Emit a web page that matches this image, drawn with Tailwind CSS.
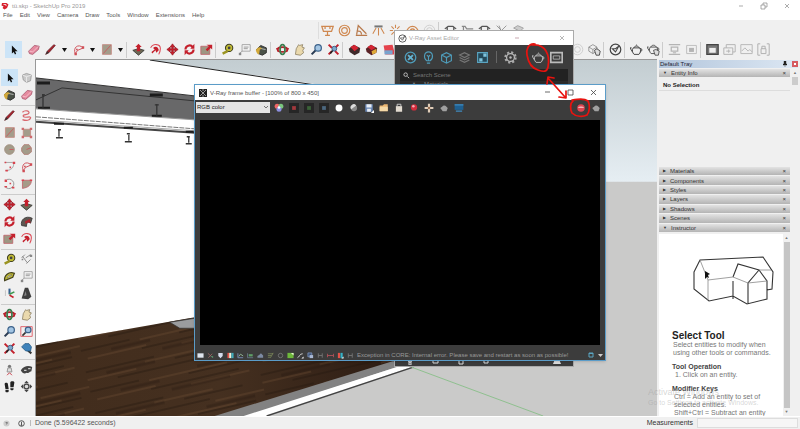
<!DOCTYPE html>
<html lang="en">
<head>
  <meta charset="UTF-8" />
  <meta name="viewport" content="width=device-width, initial-scale=1.0"/>
  <title>tü.skp - SketchUp Pro 2019</title>
  <script src="https://cdn.jsdelivr.net/npm/@tailwindcss/browser@4"></script>
</head>
<body class="relative h-screen overflow-hidden flex flex-col bg-[#f0f0f0] font-['Liberation_Sans',Arial,sans-serif] text-[6px] leading-[8px] text-[#555]">

  <!-- Icon set, 16x16 grid -->
  <svg class="hidden" xmlns="http://www.w3.org/2000/svg">
    <symbol id="select" viewBox="0 0 16 16"><path d="M6 3v10l2.300-2 1.500 3 1.500-.7-1.400-3H13z" fill="#111"/></symbol>
    <symbol id="component" viewBox="0 0 16 16"><path d="M3 5l5-2 6 2-1 7-5 2-4-3z" fill="#c9c9c9" stroke="#999"/><path d="M3 5l5 2 6-2M8 7v7" fill="none" stroke="#eee"/></symbol>
    <symbol id="eraser" viewBox="0 0 16 16"><path d="M2 10l7-7 6 1-1 4-7 6-4-1z" fill="#e58a9f" stroke="#a8566c"/><path d="M3 10l4 1 7-7" fill="none" stroke="#f8c4cf"/></symbol>
    <symbol id="pencil" viewBox="0 0 16 16"><path d="M2 14l2-4 8-8 2 1-8 9z" fill="#a3212b" stroke="#531218" stroke-width=".7"/><path d="M2 14l2-4 2 2z" fill="#333"/></symbol>
    <symbol id="freehand" viewBox="0 0 16 16"><path d="M3 4c3-3 9-2 8 1s-8 1-7 4 10-1 9 2-5 4-10 2" fill="none" stroke="#d8656c" stroke-width="1.500"/></symbol>
    <symbol id="arc" viewBox="0 0 16 16"><path d="M4 13C1 6 7 0 14 6L7 9z" fill="none" stroke="#d0515a" stroke-width="1.200"/><path d="M3 12h3v3H3zM12 4h3v3h-3zM5 7h2v2H5z" fill="#cf4d55"/></symbol>
    <symbol id="arc2" viewBox="0 0 16 16"><path d="M2 3h10M13 3c1 6-3 10-10 10" fill="none" stroke="#999"/><path d="M2 2h2v2H2zM12 2h3v3h-3zM8 8h2v2H8zM3 12h3v2H3z" fill="#d8434e"/></symbol>
    <symbol id="arc3" viewBox="0 0 16 16"><path d="M5 3c8-2 12 8 4 11-3 1-6-1-7-3" fill="none" stroke="#888"/><path d="M2 3h3v3H2zM8 7h2v2H8zM2 11h3v2H2zM11 12h3v2h-3z" fill="#d8434e"/></symbol>
    <symbol id="pie" viewBox="0 0 16 16"><path d="M3 4h11c0 6-4 9-11 10z" fill="#a59b88" stroke="#c2616a"/><path d="M2 3h3v2H2zM12 3h3v2h-3z" fill="#d8434e"/></symbol>
    <symbol id="rect" viewBox="0 0 16 16"><path d="M3 2h11v12H3z" fill="#a39c8a" stroke="#c58a82"/><path d="M4 13l9-10" stroke="#d0515a"/></symbol>
    <symbol id="rotrect" viewBox="0 0 16 16"><path d="M4 4h9v9H4z" fill="#a39c8a" stroke="#c58a82"/><path d="M2 2h3v3H2zM12 2h3v3h-3zM2 12h3v3H2zM12 12h3v3h-3z" fill="#cf6a6e"/></symbol>
    <symbol id="circle" viewBox="0 0 16 16"><circle cx="8" cy="8" r="6" fill="#a39c8a" stroke="#a08d7d"/><path d="M8 8h5" stroke="#d0515a"/></symbol>
    <symbol id="polygon" viewBox="0 0 16 16"><path d="M5 2h6l3 4v5l-4 3H5l-3-4V6z" fill="#a39c8a" stroke="#b07b73"/><path d="M8 8l5-2" stroke="#d0515a"/></symbol>
    <symbol id="pushpull" viewBox="0 0 16 16"><path d="M1 9l7-2 7 2-7 6z" fill="#6d6a55" stroke="#333"/><path d="M8 1l4 4h-2v5H6V5H4z" fill="#c4202c"/></symbol>
    <symbol id="offset" viewBox="0 0 16 16"><path d="M2 6C5 0 14 1 14 7c0 3-1 5-2 7" fill="none" stroke="#dd4b57" stroke-width="1.300"/><path d="M5 6c3-3 7-1 7 3l-3 3-1-3-4 4-1-2 4-3z" fill="#c4202c"/></symbol>
    <symbol id="move" viewBox="0 0 16 16"><path d="M8 1l3 4H9v2h2V5l4 3-4 3V9H9v2h2l-3 4-3-4h2V9H5v2L1 8l4-3v2h2V5H5z" fill="#c4202c" stroke="#8f1420" stroke-width=".7"/></symbol>
    <symbol id="rotate" viewBox="0 0 16 16"><path d="M3 8a5 5 0 019-3M13 8a5 5 0 01-9 3" fill="none" stroke="#c4202c" stroke-width="2.600"/><path d="M14 1v6H9zM2 15V9h5z" fill="#c4202c"/></symbol>
    <symbol id="followme" viewBox="0 0 16 16"><path d="M2 13C0 6 7 0 15 4l-2 6c-3-2-5-1-5 4z" fill="#5e5650" stroke="#333"/><path d="M6 8l6-3 1 5-3-1-3 2z" fill="#b3222d"/></symbol>
    <symbol id="scale" viewBox="0 0 16 16"><path d="M1 4h11v10H1z" fill="#9d9783" stroke="#c2616a"/><path d="M8 2h7v6l-2-2-4 4-2-2 4-4z" fill="#c4202c"/></symbol>
    <symbol id="tape" viewBox="0 0 16 16"><circle cx="10" cy="6" r="4.500" fill="#c3bd35" stroke="#3d3d22" stroke-width="1.300"/><circle cx="10" cy="6" r="1.700" fill="#444"/><path d="M2 13l6-3" stroke="#9b9421" stroke-width="3"/></symbol>
    <symbol id="dimension" viewBox="0 0 16 16"><path d="M3 4l6 8M2 6l4-4M8 13l5-5M7 6l6-4" fill="none" stroke="#777"/><path d="M12 2h3v3h-3zM2 7h2v2H2z" fill="#888"/></symbol>
    <symbol id="protractor" viewBox="0 0 16 16"><path d="M2 13C1 7 7 1 14 4l-2 5z" fill="#c3bd35" stroke="#44421f" stroke-width="1.500"/><path d="M5 10c1-3 3-4 6-4z" fill="#eee" stroke="#555" stroke-width=".6"/></symbol>
    <symbol id="textlabel" viewBox="0 0 16 16"><path d="M5 2h10v8H5z" fill="#f6f6f6" stroke="#999"/><path d="M7 5h6M7 7h5M5 10l-3 3" stroke="#888"/><path d="M1 12h3v3H1z" fill="#888"/></symbol>
    <symbol id="axes" viewBox="0 0 16 16"><path d="M8 9V2" stroke="#345f8f" stroke-width="2.500"/><path d="M8 10l5 3" stroke="#c4202c" stroke-width="2"/><path d="M8 9l6-3" stroke="#3e9a50" stroke-width="2"/><path d="M3 4v7" stroke="#bbb"/></symbol>
    <symbol id="text3d" viewBox="0 0 16 16"><path d="M6 1h4l4 11-4 3-8-1z" fill="#3f3f3f"/><path d="M7 5l-2 6 3-1z" fill="#888"/></symbol>
    <symbol id="paint" viewBox="0 0 16 16"><path d="M2 8l5-5 7 3v6l-5 3-5-2z" fill="#4a5148" stroke="#222"/><path d="M1 9c2-4 5-5 8-2l-3 1-1 6c-2 0-3-2-4-5z" fill="#d3a93a"/><path d="M8 7l5 1" stroke="#ccc"/></symbol>
    <symbol id="orbit" viewBox="0 0 16 16"><ellipse cx="8" cy="8" rx="6" ry="3" fill="none" stroke="#b8222d" stroke-width="2.200"/><ellipse cx="8" cy="8" rx="3" ry="6" fill="none" stroke="#3c7e4f" stroke-width="2.200"/><path d="M0 6l4 0-2 5zM16 6l-4 0 2 5z" fill="#b8222d"/></symbol>
    <symbol id="pan" viewBox="0 0 16 16"><path d="M3 14l1-7 3-5 1 1 4-1-1 3 3 1-2 3 1 3-4 3z" fill="#ead9ad" stroke="#8e8061"/></symbol>
    <symbol id="zoom" viewBox="0 0 16 16"><path d="M2 14l5-5" stroke="#2b3c53" stroke-width="2.500"/><circle cx="10" cy="6" r="4" fill="#a3c5e3" stroke="#3c628a" stroke-width="1.500"/></symbol>
    <symbol id="zoomwin" viewBox="0 0 16 16"><path d="M1 2h14v12H1z" fill="none" stroke="#e0666f" stroke-width="1.200"/><path d="M3 13l4-4" stroke="#333" stroke-width="2"/><circle cx="10" cy="6" r="3.500" fill="#a3c5e3" stroke="#3c628a" stroke-width="1.500"/></symbol>
    <symbol id="zoomext" viewBox="0 0 16 16"><path d="M2 2l4 4M14 2l-4 4M2 14l4-4M14 14l-4-4" stroke="#c4202c" stroke-width="2.500"/><path d="M4 13l4-5" stroke="#222" stroke-width="2"/><circle cx="9" cy="7" r="3" fill="#7ea9cc" stroke="#2f4f75"/></symbol>
    <symbol id="previous" viewBox="0 0 16 16"><path d="M8 9l6 5" stroke="#333" stroke-width="2.500"/><path d="M2 6l4-4h5l3 4-1 5-6 0z" fill="#3f83bb" stroke="#245a86"/></symbol>
    <symbol id="camera" viewBox="0 0 16 16"><circle cx="8" cy="4" r="2" fill="#777"/><path d="M6 6h4l1 5H5z" fill="#ddd" stroke="#888"/><path d="M5 15l3-3 3 3" fill="none" stroke="#c4202c"/></symbol>
    <symbol id="look" viewBox="0 0 16 16"><path d="M1 9c4-6 10-6 14-4l-1 5c-3 1-4 3-6 2-2 2-5 1-7-3z" fill="#444"/><path d="M5 9h3M10 7h3" stroke="#ccc" stroke-width="1.500"/></symbol>
    <symbol id="walk" viewBox="0 0 16 16"><path d="M2 5c0-2 4-2 4 0l1 6H3zM3 12h4v2c-1 2-4 1-4 0zM9 3c0-2 5-2 5 0l-1 6H9zM9 10h4v1c0 2-4 2-4 0z" fill="#222"/></symbol>
    <symbol id="section" viewBox="0 0 16 16"><path d="M8 1l3 3H5zM8 15l3-3H5zM1 8l3-3v6zM15 8l-3-3v6z" fill="#444"/><circle cx="8" cy="8" r="3" fill="#ddd" stroke="#444" stroke-width="1.500"/></symbol>
    <symbol id="warehouse" viewBox="0 0 16 16"><path d="M1 7l6-5 8 4-1 6-6 3-6-4z" fill="#3f2a2a"/><path d="M3 5l5-3 5 4-5 4z" fill="#d42432"/></symbol>
    <symbol id="extension" viewBox="0 0 16 16"><path d="M1 7l6-5 8 4-1 6-6 3-6-4z" fill="#5a2226"/><path d="M3 5l5-3 5 4-5 3z" fill="#d42432"/><path d="M8 10l6-3v5l-5 2z" fill="#e0aa38"/></symbol>
    <symbol id="layout" viewBox="0 0 16 16"><path d="M2 3l11-1 3 12H4z" fill="#e4434d"/><path d="M3 9h10v5H3z" fill="#79a3cd"/></symbol>

    <symbol id="lightrect" viewBox="0 0 16 16"><path d="M1 3h14l-2 6H3zM8 9v5M5 14h6M5 3v3M11 3v3" fill="none" stroke="#cf8850" stroke-width="1.500"/></symbol>
    <symbol id="lightsphere" viewBox="0 0 16 16"><circle cx="8" cy="8" r="6.500" fill="none" stroke="#cf8850" stroke-width="1.400"/><circle cx="8" cy="8" r="3.500" fill="none" stroke="#cf8850" stroke-width="1.400"/></symbol>
    <symbol id="lightspot" viewBox="0 0 16 16"><path d="M2 13L4 2l10 10M2 9c4-1 6 0 6 4M1 14h14" fill="none" stroke="#b87a4c" stroke-width="1.500"/></symbol>
    <symbol id="lighties" viewBox="0 0 16 16"><path d="M3 3h10" stroke="#777" stroke-width="2.500"/><path d="M8 5v9M5 5l-4 7M11 5l4 7" fill="none" stroke="#cf8850" stroke-width="1.300"/></symbol>
    <symbol id="lightomni" viewBox="0 0 16 16"><path d="M8 1v4M8 11v4M1 8h4M11 8h4M3 3l3 3M10 10l3 3M13 3l-3 3M3 13l3-3" stroke="#cf8850" stroke-width="1.300"/></symbol>
    <symbol id="lightdome" viewBox="0 0 16 16"><path d="M1 10a7 7 0 0114 0zM5 10a3 4 0 016 0" fill="none" stroke="#cf8850" stroke-width="1.500"/></symbol>
    <symbol id="lightmesh" viewBox="0 0 16 16"><circle cx="8" cy="8" r="6.500" fill="none" stroke="#c8c8c8"/><circle cx="8" cy="8" r="3.500" fill="none" stroke="#c8c8c8"/></symbol>
    <symbol id="plane" viewBox="0 0 16 16"><path d="M1 6l4-3h6l4 3M4 8V4M12 8V4" fill="none" stroke="#555" stroke-width="1.500"/></symbol>
    <symbol id="proxy" viewBox="0 0 16 16"><path d="M1 3h4l2 3h8M3 3v6" fill="none" stroke="#888" stroke-width="1.500"/></symbol>
    <symbol id="fur" viewBox="0 0 16 16"><path d="M2 2l6 6 6-6M5 2l3 8" fill="none" stroke="#888"/></symbol>
    <symbol id="mesh" viewBox="0 0 16 16"><path d="M2 5l5-3 7 3-4 4z" fill="#ccc" stroke="#999"/></symbol>
    <symbol id="cubehand" viewBox="0 0 16 16"><path d="M1 5l5-3 5 3v5l-5 3-5-3zM1 5l5 3 5-3M6 8v5" fill="none" stroke="#888"/><path d="M8 9l3-2 4 3-1 5h-4z" fill="#ddd" stroke="#333"/></symbol>
    <symbol id="vray" viewBox="0 0 16 16"><circle cx="8" cy="8" r="6.500" fill="none" stroke="#444" stroke-width="1.500"/><path d="M4 7l4 4 4-7-4 3z" fill="none" stroke="#444" stroke-width="1.300"/></symbol>
    <symbol id="teapot" viewBox="0 0 16 16"><path d="M4 6h8c2 3 1 6-1 8H5c-2-2-3-5-1-8zM5 6c0-3 6-3 6 0M8 3V2M3 11L0 6h2M12 7c4-1 3 4 0 4" fill="none" stroke="currentColor" stroke-width="1.200"/></symbol>
    <symbol id="teapothand" viewBox="0 0 16 16"><path d="M4 5h8c2 3 1 6-1 8H5c-2-2-3-5-1-8zM5 5c0-3 6-3 6 0M3 10L0 5h2M12 6c4-1 3 4 0 4" fill="none" stroke="#555" stroke-width="1.200"/><path d="M8 9l3-1 4 2-1 5h-4z" fill="#ddd" stroke="#444"/></symbol>
    <symbol id="viewport" viewBox="0 0 16 16"><path d="M1 2h14M1 14h14M4 5h8v5H4zM6 12h4" fill="none" stroke="#b4b4b4" stroke-width="1.500"/></symbol>
    <symbol id="vpregion" viewBox="0 0 16 16"><path d="M2 3h12v10H2z" fill="none" stroke="#b4b4b4"/><path d="M5 6h6v5H5z" fill="#b4b4b4"/></symbol>
    <symbol id="bufferwin" viewBox="0 0 16 16"><path d="M1 2h14v12H1z" fill="#777" stroke="#444" stroke-width="1.500"/><path d="M4 6h8v6H4z" fill="#eee"/></symbol>
    <symbol id="frame" viewBox="0 0 16 16"><path d="M1 2h14v12H1z" fill="none" stroke="currentColor" stroke-width="2"/><path d="M4 6h8v4H4z" fill="none" stroke="currentColor"/></symbol>
    <symbol id="batch" viewBox="0 0 16 16"><path d="M1 6h11v8H1zM4 6V2h11v9h-3M4 10h5M7 8v4" fill="none" stroke="#b4b4b4" stroke-width="1.200"/></symbol>
    <symbol id="cloudframe" viewBox="0 0 16 16"><path d="M1 2h14v11H1zM2 10l4-4 4 4 2-2 3 3" fill="none" stroke="#b8b8b8" stroke-width="1.200"/></symbol>
    <symbol id="lock" viewBox="0 0 16 16"><path d="M4 1H1v14h3M12 1h3v14h-3M5 7h6v6H5zM6 7V4h4v3" fill="none" stroke="#b0b0b0" stroke-width="1.200"/></symbol>

    <symbol id="materials" viewBox="0 0 16 16"><circle cx="8" cy="8" r="6.500" fill="none" stroke="#4f9dbb" stroke-width="1.600"/><path d="M5 5l6 6M11 5l-6 6" stroke="#63b4d3" stroke-width="2.200"/></symbol>
    <symbol id="bulb" viewBox="0 0 16 16"><path d="M6 12C1 8 3 1 8 1s7 7 2 11zM6 15h4M8 7v5M6 5l2 2 2-2" fill="none" stroke="#4f9dbb" stroke-width="1.400"/></symbol>
    <symbol id="cube" viewBox="0 0 16 16"><path d="M2 5l6-3 6 3v7l-6 3-6-3zM2 5l6 3 6-3M8 8v7" fill="none" stroke="#4f9dbb" stroke-width="1.400"/></symbol>
    <symbol id="layers" viewBox="0 0 16 16"><path d="M2 5l6-3 6 3-6 3zM2 8l6 3 6-3M2 11l6 3 6-3" fill="none" stroke="#777" stroke-width="1.400"/></symbol>
    <symbol id="textures" viewBox="0 0 16 16"><path d="M2 2h12v12H2z" fill="#24495a" stroke="#5aa5c2" stroke-width="1.400"/><path d="M9 3h4v4H9zM4 9h4v4H4z" fill="#7fc3dc"/></symbol>
    <symbol id="gear" viewBox="0 0 16 16"><circle cx="8" cy="8" r="6.300" fill="none" stroke="#aaa" stroke-width="2.600" stroke-dasharray="2.600 2.350"/><circle cx="8" cy="8" r="4.800" fill="#3c3c3c" stroke="#bbb" stroke-width="1.500"/><circle cx="8" cy="8" r="1.500" fill="#bbb"/></symbol>

    <symbol id="rgb" viewBox="0 0 16 16"><circle cx="5" cy="5" r="4" fill="#e66"/><circle cx="11" cy="5" r="4" fill="#7ac57d"/><circle cx="8" cy="10" r="4" fill="#8d8fe0"/><circle cx="8" cy="7" r="2" fill="#fff"/></symbol>
    <symbol id="red" viewBox="0 0 16 16"><path d="M0 0h16v16H0z" fill="#262626"/><path d="M5 5h6v6H5z" fill="#a3393d"/></symbol>
    <symbol id="green" viewBox="0 0 16 16"><path d="M0 0h16v16H0z" fill="#262626"/><path d="M5 5h6v6H5z" fill="#3b6338"/></symbol>
    <symbol id="blue" viewBox="0 0 16 16"><path d="M0 0h16v16H0z" fill="#262626"/><path d="M5 5h6v6H5z" fill="#4c6880"/></symbol>
    <symbol id="alpha" viewBox="0 0 16 16"><circle cx="8" cy="8" r="5.500" fill="#fff"/></symbol>
    <symbol id="mono" viewBox="0 0 16 16"><circle cx="8" cy="8" r="5" fill="#888"/><path d="M3.500 10a5 5 0 018-6z" fill="#ddd"/></symbol>
    <symbol id="save" viewBox="0 0 16 16"><path d="M2 2h12v12H2z" fill="#6a87b5"/><path d="M4 2h8v5H4zM5 9h6v5H5z" fill="#e8edf5"/><path d="M16 11v5h-5z" fill="#fff"/></symbol>
    <symbol id="open" viewBox="0 0 16 16"><path d="M1 4h5l2-2h6v11H1z" fill="#eab673"/><path d="M1 6h13v7H1z" fill="#f4d9a8"/></symbol>
    <symbol id="clear" viewBox="0 0 16 16"><path d="M3 5h10v9H3z" fill="#e2dbd0"/><path d="M5 5V2h6v3" fill="none" stroke="#ccc" stroke-width="1.500"/></symbol>
    <symbol id="link" viewBox="0 0 16 16"><circle cx="8" cy="7" r="5" fill="#d32d3d"/><circle cx="7" cy="5" r="2" fill="#f3aab2"/></symbol>
    <symbol id="track" viewBox="0 0 16 16"><path d="M8 1v14M1 8h14" stroke="#e0cdb9" stroke-width="3.500"/><circle cx="8" cy="8" r="2" fill="#9a6e4f"/></symbol>
    <symbol id="pot" viewBox="0 0 16 16"><path d="M2 8l3-2c2-3 5-2 7 0l2 2-2 5H6z" fill="#a0a0a0"/></symbol>
    <symbol id="monitor" viewBox="0 0 16 16"><path d="M1 2h14v9H1z" fill="#1f6091"/><path d="M1 3h14M3 13h10" stroke="#3f8ac0" stroke-width="2"/></symbol>
    <symbol id="stop" viewBox="0 0 16 16"><circle cx="8" cy="8" r="6" fill="#df4652"/><path d="M3 8c2-3 8-3 10 0z" fill="#f6b3b8"/></symbol>
    <symbol id="history" viewBox="0 0 16 16"><path d="M1 3h14v10H1z" fill="#dfe5ee"/></symbol>
    <symbol id="correct" viewBox="0 0 16 16"><path d="M2 3l11 10M3 13l9-9" stroke="#9a6763" stroke-width="2"/><path d="M8 9h6v5z" fill="#4f8c69"/></symbol>
    <symbol id="shield" viewBox="0 0 16 16"><path d="M3 2h10v7l-5 5-5-5z" fill="#d5dced"/></symbol>
    <symbol id="bars" viewBox="0 0 16 16"><path d="M1 2h4v12H1z" fill="#e45248"/><path d="M5 2h5v12H5z" fill="#f2edd7"/><path d="M10 2h5v12h-5z" fill="#40aab8"/></symbol>
    <symbol id="curve" viewBox="0 0 16 16"><path d="M2 3v10h12" fill="none" stroke="#788bb8" stroke-width="2"/><path d="M4 10l4-5 6 4" fill="none" stroke="#9ac09d" stroke-width="2"/></symbol>
    <symbol id="balance" viewBox="0 0 16 16"><path d="M1 3v10h13" fill="none" stroke="#678" stroke-width="2"/><path d="M4 5h9v5H4z" fill="#5f9f68"/></symbol>
    <symbol id="levels" viewBox="0 0 16 16"><path d="M1 13V9l4-2 4-4 5 5v5z" fill="#7c8aa3"/></symbol>
    <symbol id="exposure" viewBox="0 0 16 16"><path d="M2 4h12M2 8h8M2 12h6M14 2L8 13" fill="none" stroke="#87955f" stroke-width="1.500"/></symbol>
    <symbol id="ring" viewBox="0 0 16 16"><circle cx="8" cy="8" r="5" fill="none" stroke="#777" stroke-width="2"/></symbol>
    <symbol id="lut" viewBox="0 0 16 16"><path d="M1 2h14v12H1z" fill="#6eb83c"/><path d="M9 2h6v6z" fill="#e7f2cf"/></symbol>
    <symbol id="srgb" viewBox="0 0 16 16"><path d="M1 13c4 0 5-10 12-9" fill="none" stroke="#ddd" stroke-width="2"/><path d="M15 10v5h-5z" fill="#fff"/></symbol>
    <symbol id="stamp" viewBox="0 0 16 16"><path d="M2 2h9v9H2z" fill="#40567a" stroke="#8aa2cc" stroke-width="1.500"/><path d="M6 7h8v7H6z" fill="#a9b8d4"/></symbol>
    <symbol id="dim" viewBox="0 0 16 16"><path d="M3 3v10M12 3v10M3 8h9" stroke="#777" stroke-width="2"/></symbol>
    <symbol id="compare" viewBox="0 0 16 16"><path d="M1 4v8M15 4v8M1 8h14" stroke="#b5525a" stroke-width="2"/></symbol>
    <symbol id="stereo" viewBox="0 0 16 16"><path d="M2 2h5v12H2z" fill="#e45248"/><path d="M8 2h5v12H8z" fill="#35b3c8"/><path d="M15 10v5h-5z" fill="#fff"/></symbol>
  </svg>

  <header class="bg-white h-5 shrink-0 flex flex-col">
    <div class="flex items-center h-[11px] px-px">
      <svg class="w-2 h-2" viewBox="0 0 16 16"><path d="M2 2h9l4 3-3 7-5 3-4-3 2-3-4-2z" fill="#d7202e"/><path d="M5 5h5v3" fill="none" stroke="#fff" stroke-width="1.500"/></svg>
      <h1 class="ml-[3px] text-[#999]">tü.skp - SketchUp Pro 2019</h1>
      <div class="ml-auto mr-1 flex gap-[7px] text-[#888]">
        <button class="w-4 flex justify-center" aria-label="Minimize"><svg class="w-2 h-2" viewBox="0 0 8 8"><path d="M2 4h4" stroke="currentColor" stroke-width=".7"/></svg></button>
        <button class="w-4 flex justify-center" aria-label="Restore"><svg class="w-2 h-2" viewBox="0 0 8 8"><path d="M1 3h4v4H1zM3 3V1h4v4H5" fill="none" stroke="currentColor" stroke-width=".7"/></svg></button>
        <button class="w-4 flex justify-center" aria-label="Close"><svg class="w-2 h-2" viewBox="0 0 8 8"><path d="M2 2l4 4M6 2L2 6" stroke="currentColor" stroke-width=".7"/></svg></button>
      </div>
    </div>
    <nav class="flex gap-[7px] px-[3px]">
      <a href="#">File</a><a href="#">Edit</a><a href="#">View</a><a href="#">Camera</a><a href="#">Draw</a><a href="#">Tools</a><a href="#">Window</a><a href="#">Extensions</a><a href="#">Help</a>
    </nav>
  </header>

  <div class="h-5 shrink-0 flex items-center pl-[318px]">
    <div class="flex items-center border-l border-[#ddd]" data-tools="lightrect lightsphere lightspot lighties lightomni lightdome lightmesh | plane proxy plane fur mesh"></div>
  </div>
  <div class="h-[19px] shrink-0 flex items-center justify-between pl-[5px] pr-7">
    <div class="flex items-center" data-tools="select* _ eraser pencil v arc v rect v | pushpull offset move rotate scale | tape textlabel paint | orbit pan zoom zoomext | warehouse extension layout"></div>
    <div class="flex items-center text-[#444]" data-tools="lightmesh cubehand | vray | teapot teapothand | viewport vpregion | bufferwin batch cloudframe lock"></div>
  </div>

  <main class="flex-1 min-h-0 flex">
    <aside class="w-9 shrink-0 border-r border-[#999] pt-[10px] pl-px">
      <div class="grid grid-cols-2" data-tools="select* component paint eraser - pencil freehand rect rotrect circle polygon arc2 arc arc3 pie - move pushpull rotate followme scale offset - tape dimension protractor textlabel axes text3d - orbit pan zoom zoomwin zoomext previous - camera look walk section"></div>
    </aside>

    <!-- Model view -->
    <svg class="flex-1 min-w-0 h-full border-t border-[#999]" viewBox="36 59 622 357" preserveAspectRatio="none" fill="none">
      <defs>
        <linearGradient id="sky" x1="0" y1="0" x2="0" y2="1"><stop offset="0" stop-color="#c3cdd1"/><stop offset="1" stop-color="#e6eef3"/></linearGradient>
        <linearGradient id="wood" x1="0" y1="0" x2="1" y2="0"><stop offset="0" stop-color="#412c1c"/><stop offset=".5" stop-color="#453020"/><stop offset="1" stop-color="#2c1c13"/></linearGradient>
        <pattern id="planks" width="170" height="42" patternUnits="userSpaceOnUse" patternTransform="rotate(-13)">
          <path d="M0 4h70M90 10h60M30 16h85M0 24h50M100 28h60M60 35h90" stroke="#21150e" opacity=".7"/>
          <path d="M60 7h60M0 12h50M120 19h50M60 26h80M5 33h60M100 39h60" stroke="#6d4d34" stroke-width="2" opacity=".35"/>
          <path d="M20 9h50M110 23h50M30 29h40M80 40h60" stroke="#21150e" stroke-width="3" opacity=".3"/>
        </pattern>
      </defs>
      <path d="M36 59h622v123H36z" fill="url(#sky)"/>
      <path d="M36 181h622v235H36z" fill="#cacac9"/>
      <path d="M36 59h114l172 25v276H36z" fill="#fff"/>
      <path d="M150 59l172 26" stroke="#222"/>
      <path d="M36 77l159 18v24L36 108z" fill="#686869"/>
      <path d="M36 77l159 18M36 99l26-12 133 13" stroke="#333"/>
      <path d="M36 108l159 11" stroke="#999"/>
      <path d="M36 116l159 12" stroke="#777" stroke-dasharray="5 1"/>
      <path d="M36 121l159 11" stroke="#444" stroke-width="2"/>
      <path d="M36 119l159 11" stroke="#aaa"/>
      <path d="M37 82h13M150 94h13" stroke="#1c1c1c" stroke-width="3"/>
      <path d="M38 107h12M152 115h10M54 123h10M124 127h9M186 131h8" stroke="#1c1c1c" stroke-width="2"/>
      <path d="M43 93v14M157 103v12M59 129v7M129 134v6M189 136v6" stroke="#333" stroke-width="1.300"/>
      <path d="M42 94h3M155 104h4M58 129h3M127 133h3M187 136h3M56 137h7M125 141h7M186 143h6" stroke="#333" stroke-width="1.500"/>
      <path d="M36 345l159-28 210 43-187 56H36z" fill="url(#wood)"/>
      <path d="M36 345l159-28 210 43-187 56H36z" fill="url(#planks)"/>
      <path d="M170 322l25-4v10h-15z" fill="#9b9c9e" stroke="#333" stroke-width=".7"/>
      <path d="M393 361h22L248 416h-33z" fill="#828282"/>
      <path d="M400 366h14L268 416h-24z" fill="#fff"/>
      <path d="M414 367L267 416" stroke="#444" stroke-width="1.500"/>
      <path d="M412 367l132 49" stroke="#8fc08f"/>
    </svg>

    <!-- Default tray -->
    <aside class="relative w-[143px] shrink-0 pl-[2px] pr-[2px] pt-px flex flex-col text-[#333]">
      <div class="flex items-center h-2 pl-px bg-linear-to-r from-[#b3c6dc] to-[#dce7f3] text-[#223]">
        <h2>Default Tray</h2>
        <svg class="ml-auto mr-[5px] w-1 h-[6px]" viewBox="0 0 4 6"><path d="M1 0h2v3h1v1H0V3h1zM2 4v2" fill="#222" stroke="#222" stroke-width=".4"/></svg>
        <button class="w-[6px] h-[6px] bg-[#d65a61] text-white" aria-label="Close tray"><svg viewBox="0 0 6 6"><path d="M2 2l2 2M4 2L2 4" stroke="currentColor"/></svg></button>
      </div>
      <div class="flex mt-px">
        <button class="w-[131px] h-2 flex items-center bg-linear-to-b from-[#e3e3e3] to-[#b4b4b4] px-1 gap-[4px] leading-[8px]"><span class="text-[4px]">▼</span>Entity Info<span class="ml-auto">×</span></button>
        <span class="ml-auto mr-px text-[4px] text-[#777]">▲</span>
      </div>
      <div class="flex h-[90px] shrink-0">
        <p class="w-[131px] h-[14px] pl-1 pt-1 font-bold border-b border-[#ddd] text-[#222]">No Selection</p>
        <span class="ml-auto w-[6px] h-2 bg-[#ccc]"></span>
      </div>
      <div id="panels" class="w-[131px] h-[66px] shrink-0 grid grid-rows-7"></div>
      <div class="flex flex-1 min-h-0 w-[131px] mt-px">
        <section class="flex-1 bg-white overflow-hidden pl-[13px] text-[7px] leading-[8px] text-[#777]">
          <svg class="mt-[18px] ml-[19px] w-[86px] h-[56px]" viewBox="691 252 86 56" fill="none" stroke="#333">
            <path d="M694 272l6-12 63-3 10 15-1 17-5 1v9l-20 5-14-8-24 5-15-12zM733 281v18M733 277l5-13 21 6 8 11v10M759 270l-11 13v21" stroke-width="1.100"/>
            <path d="M700 260l8 20v20M708 280l25-3 15 6 19-2M759 270h12" stroke="#888" stroke-width=".8"/>
            <path d="M705 271v8l2-2 2 1-1-3 2-1z" fill="#111" stroke="none"/>
          </svg>
          <h3 class="mt-[22px] text-[10px] leading-[11px] font-bold text-[#222]">Select Tool</h3>
          <p class="ml-px whitespace-nowrap">Select entities to modify when<br>using other tools or commands.</p>
          <h4 class="mt-[6px] font-bold text-[#444]">Tool Operation</h4>
          <p class="ml-[3px]">1. Click on an entity.</p>
          <h4 class="mt-[6px] font-bold text-[#444]">Modifier Keys</h4>
          <p class="ml-[2px] whitespace-nowrap">Ctrl = Add an entity to set of<br>selected entities.<br>Shift+Ctrl = Subtract an entity</p>
        </section>
        <div class="w-[7px] flex flex-col items-center text-[4px] text-[#777]"><span>▲</span><span class="w-[6px] flex-1 bg-[#c5c5c5]"></span><span>▼</span></div>
      </div>
      <p class="absolute left-[-9px] bottom-2 w-36 text-[#999]/40 text-[7px] leading-[10px] whitespace-nowrap"><span class="text-[9px]">Activate Windows</span><br>Go to Settings to activate Windows.</p>
    </aside>
  </main>

  <footer class="h-[13px] shrink-0 flex items-center border-t border-white pl-[3px] pr-[2px]">
    <svg class="w-[7px] h-[7px]" viewBox="0 0 8 8"><circle cx="4" cy="4" r="3.500" fill="#ccc"/><path d="M3 3h2L4 5" fill="none" stroke="#666"/></svg>
    <svg class="ml-2 w-[7px] h-[7px]" viewBox="0 0 8 8"><circle cx="4" cy="4" r="3.200" fill="none" stroke="#444"/><path d="M4 2v4M3 6h2" stroke="#444"/></svg>
    <span class="ml-[5px] mr-1 w-px h-[6px] bg-[#bbb]"></span>
    <span class="text-[7px]">Done (5.596422 seconds)</span>
    <label for="measure" class="ml-auto mr-1 text-[7px] text-[#333]">Measurements</label>
    <input id="measure" class="w-[101px] h-[10px] bg-[#f6f6f6] border border-[#ddd]" />
  </footer>

  <!-- V-Ray Asset Editor -->
  <section class="absolute left-[394px] top-[30px] w-[180px] h-[337px] flex flex-col bg-[#3c3c3c] border border-[#aaa]">
    <div class="h-[14px] shrink-0 bg-white flex items-center px-[3px] text-[#aaa]">
      <svg class="w-[9px] h-[9px] mr-[2px]"><use href="#vray"/></svg>
      <h2>V-Ray Asset Editor</h2>
      <button class="ml-auto mr-[39px]" aria-label="Minimize editor"><svg class="w-[6px] h-[6px]" viewBox="0 0 6 6"><path d="M1 3h4" stroke="#c9a9b1"/></svg></button>
      <button class="mr-[5px]" aria-label="Close editor"><svg class="w-[6px] h-[6px]" viewBox="0 0 6 6"><path d="M1 1l4 4M5 1L1 5" stroke="#999" stroke-width=".7"/></svg></button>
    </div>
    <div class="h-6 shrink-0 flex items-center pl-[7px] pr-[8px] text-[#bbb]">
      <div class="flex gap-px" data-tools="materials bulb cube layers textures"></div>
      <span class="mx-[5px] w-px h-3 bg-[#666]"></span>
      <div class="flex" data-tools="gear"></div>
      <div class="ml-auto flex gap-px" data-tools="teapot frame"></div>
    </div>
    <div class="flex-1 mx-[5px] bg-[#2b2b2b] flex flex-col">
      <label class="flex items-center h-[12px] px-[3px] gap-[3px] bg-[#222]">
        <svg class="w-[7px] h-[7px]" viewBox="0 0 8 8"><circle cx="3" cy="3" r="2" fill="none" stroke="#ccc"/><path d="M5 5l2 2" stroke="#ccc"/></svg>
        <input class="flex-1 min-w-0 placeholder:text-[#777]" placeholder="Search Scene" aria-label="Search Scene" />
      </label>
      <div class="flex gap-2 pl-3 leading-[6px] text-[#888]"><span class="text-[4px]">▼</span>Materials</div>
    </div>
    <div class="h-2 shrink-0 flex items-center px-3 gap-[19px] text-[#ddd]">
      <svg class="w-[6px] h-[6px]" viewBox="0 0 6 6"><path d="M0 0l2 3h2l2-3M2 3h2v3H2z" stroke="currentColor" fill="none"/></svg>
      <svg class="w-[7px] h-[6px]" viewBox="0 0 7 6"><path d="M1 1h5v3H1z" stroke="currentColor" fill="none"/></svg>
      <svg class="w-[6px] h-[6px]" viewBox="0 0 6 6"><path d="M1 1h4v4H1z" stroke="currentColor" fill="none"/></svg>
      <svg class="w-[6px] h-[6px]" viewBox="0 0 6 6"><path d="M1 0v4h4V0" stroke="currentColor" fill="none"/></svg>
      <svg class="ml-auto w-[8px] h-[6px]" viewBox="0 0 8 6"><path d="M0 5l2-5h4l2 5z" fill="currentColor"/></svg>
    </div>
  </section>

  <!-- V-Ray frame buffer -->
  <section class="absolute left-[194px] top-[84px] w-[412px] h-[277px] flex flex-col bg-[#3c3c3c] border border-[#5b9cc8] shadow">
    <div class="h-[15px] shrink-0 bg-white flex items-center pl-1 pr-2 text-[#555]">
      <svg class="w-[8px] h-[8px] mr-[3px]" viewBox="0 0 8 8"><path d="M0 0h8v8H0z" fill="#222"/><path d="M1 1l6 6M7 1L1 7M4 0v2M4 6v2" stroke="#bbb" stroke-width=".8"/></svg>
      <h2>V-Ray frame buffer - [100% of 800 x 450]</h2>
      <div class="ml-auto flex gap-4">
        <button aria-label="Minimize buffer"><svg class="w-[7px] h-[7px]" viewBox="0 0 7 7"><path d="M1 3h5" stroke="#444" stroke-width=".8"/></svg></button>
        <button aria-label="Maximize buffer"><svg class="w-[7px] h-[7px]" viewBox="0 0 7 7"><path d="M1 1h5v5H1z" fill="none" stroke="#444" stroke-width=".8"/></svg></button>
        <button aria-label="Close buffer"><svg class="w-[7px] h-[7px]" viewBox="0 0 7 7"><path d="M1 1l5 5M6 1L1 6" stroke="#444" stroke-width=".8"/></svg></button>
      </div>
    </div>
    <div class="h-[15px] shrink-0 flex items-center pl-px pr-[2px]">
      <div class="relative flex w-[74px] mr-px">
        <select class="w-full h-[11px] appearance-none bg-[#e4e4e4] text-[#222] leading-[11px] pl-px" aria-label="Channel"><option>RGB color</option></select>
        <svg class="absolute right-[2px] top-[4px] w-1 h-[3px]" viewBox="0 0 4 3"><path d="M0 0l2 2 2-2" fill="none" stroke="#444" stroke-width=".7"/></svg>
      </div>
      <div class="flex" data-size="buffer" data-tools="rgb red green blue alpha mono save open clear link track pot monitor"></div>
      <div class="ml-auto flex" data-size="buffer" data-tools="stop pot"></div>
    </div>
    <div class="flex-1 mx-[5px] my-[5px] bg-black"></div>
    <div class="h-[10px] shrink-0 flex items-center pr-[2px] text-[#999]">
      <div class="flex" data-size="status" data-tools="history correct shield bars curve balance levels exposure ring lut srgb stamp dim compare stereo dim"></div>
      <p class="ml-[2px] whitespace-nowrap">Exception in CORE: Internal error. Please save and restart as soon as possible!</p>
      <svg class="ml-auto w-[6px] h-[6px]" viewBox="0 0 6 6"><path d="M1 1h4v4H1zM1 1.500h4" fill="none" stroke="#5aa5c2"/></svg>
      <svg class="ml-[4px] w-[5px] h-[6px]" viewBox="0 0 5 6"><path d="M0 2h5L2.500 5z" fill="#ccc"/></svg>
    </div>
  </section>

  <!-- Marker notes -->
  <svg class="absolute left-[520px] top-[36px] w-[80px] h-[88px] pointer-events-none" viewBox="520 36 80 88" fill="none" stroke="#e8130f" stroke-width="1.700" stroke-linecap="round" stroke-linejoin="round">
    <path d="M535 44c-7-1-9 6-8 11 1 6 4 13 11 15 6 2 9 2 10-3s1-11-2-16-7-7-14-6"/>
    <path d="M548 78l17 19M547 84l1-7 6 1M559 97l7 1v-7"/>
    <path d="M573 101c-3 2-3 8-1 12 4 4 11 4 15 2 3-4 3-10 1-14-4-3-10-2-16-1"/>
  </svg>

  <script>
    const sizes = {
      buffer: ["w-[15px] h-[13px]", "w-[10px] h-[10px]"],
      status: ["w-[10px] h-[10px]", "w-[7px] h-[7px]"],
      normal: ["w-[17px] h-[17px]", "w-[13px] h-[13px]"],
    };

    document.querySelectorAll("[data-tools]").forEach((bar) => {
      const [box, icon] = sizes[bar.dataset.size || "normal"];
      bar.innerHTML = bar.dataset.tools.split(" ").map((name) => {
        if (name === "|") return '<span class="w-1 h-4 border-l border-[#ccc]"></span>';
        if (name === "-") return '<span class="col-span-2 h-1 flex items-center"><span class="w-full h-px bg-[#ccc]"></span></span>';
        if (name === "_") return '<span class="w-[3px]"></span>';
        if (name === "v") return '<button class="w-[11px] flex justify-center" aria-label="More"><svg class="w-[5px] h-[4px]" viewBox="0 0 5 4"><path d="M0 0h5L2.500 4z" fill="#111"/></svg></button>';
        const active = name.endsWith("*") ? "bg-[#cce4f7]" : "";
        const id = name.replace("*", "");
        return `<button class="${box} ${active} flex items-center justify-center shrink-0" aria-label="${id}"><svg class="${icon}"><use href="#${id}"/></svg></button>`;
      }).join("");
    });

    const panels = ["Materials", "Components", "Styles", "Layers", "Shadows", "Scenes", "Instructor"];
    document.getElementById("panels").innerHTML = panels.map((name) => `
      <button class="flex items-center min-h-0 bg-linear-to-b from-[#e3e3e3] to-[#b4b4b4] border-b border-[#f0f0f0] px-1 gap-[4px] leading-[8px]">
        <span class="text-[4px]">${name === "Instructor" ? "▼" : "▶"}</span>${name}<span class="ml-auto">×</span>
      </button>`).join("");
  </script>
</body>
</html>
